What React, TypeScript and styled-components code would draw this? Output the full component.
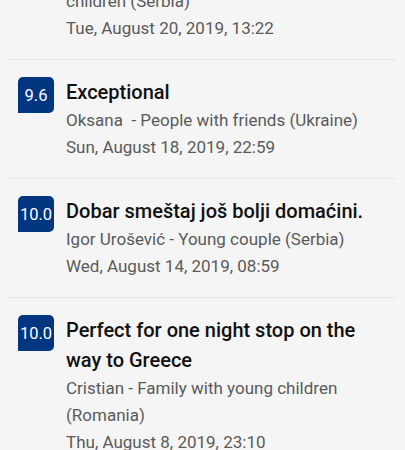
import styled, { createGlobalStyle } from 'styled-components';

type Review = {
  id: number;
  score: string;
  title: string;
  author: string;
  date: string;
};

const reviews: Review[] = [
  {
    id: 1,
    score: '10.0',
    title: 'Excellent',
    author: 'Aleksandar Jovanović - Family with young children (Serbia)',
    date: 'Tue, August 20, 2019, 13:22',
  },
  {
    id: 2,
    score: '9.6',
    title: 'Exceptional',
    author: 'Oksana\u00a0 - People with friends (Ukraine)',
    date: 'Sun, August 18, 2019, 22:59',
  },
  {
    id: 3,
    score: '10.0',
    title: 'Dobar smeštaj još bolji domaćini.',
    author: 'Igor Urošević - Young couple (Serbia)',
    date: 'Wed, August 14, 2019, 08:59',
  },
  {
    id: 4,
    score: '10.0',
    title: 'Perfect for one night stop on the way to Greece',
    author: 'Cristian - Family with young children (Romania)',
    date: 'Thu, August 8, 2019, 23:10',
  },
];

const GlobalStyle = createGlobalStyle`
  html, body {
    margin: 0;
    padding: 0;
    background: #f5f5f5;
    overflow: hidden;
  }
  body {
    font-family: Roboto, "Noto Sans", sans-serif;
  }
`;

const App = () => {
  return (
    <>
      <GlobalStyle />
      <List>
        {reviews.map(review => (
          <Item key={review.id}>
            <Score>{review.score}</Score>
            <Body>
              <Title>{review.title}</Title>
              <Meta>{review.author}</Meta>
              <Meta>{review.date}</Meta>
            </Body>
          </Item>
        ))}
      </List>
    </>
  );
};

export default App;

// the screenshot is scrolled, the first review sits partly above the top
const List = styled.div`
  margin: -86px 8px 0 8px;
`;

const Item = styled.div`
  display: flex;
  align-items: flex-start;
  gap: 12px;
  padding: 17px 8px 17px 10px;
  border-bottom: 1px solid #e6e6e6;
`;

const Score = styled.div`
  flex: none;
  width: 36px;
  height: 36px;
  display: flex;
  align-items: center;
  justify-content: center;
  background: #003580;
  color: #ffffff;
  font-size: 16.5px;
  border-radius: 5px 5px 5px 0;
`;

const Body = styled.div`
  flex: 1;
  min-width: 0;
`;

const Title = styled.div`
  font-size: 20px;
  line-height: 30px;
  font-weight: 500;
  color: #111111;
`;

const Meta = styled.div`
  font-size: 17px;
  line-height: 27px;
  color: #5a5a5a;
`;
